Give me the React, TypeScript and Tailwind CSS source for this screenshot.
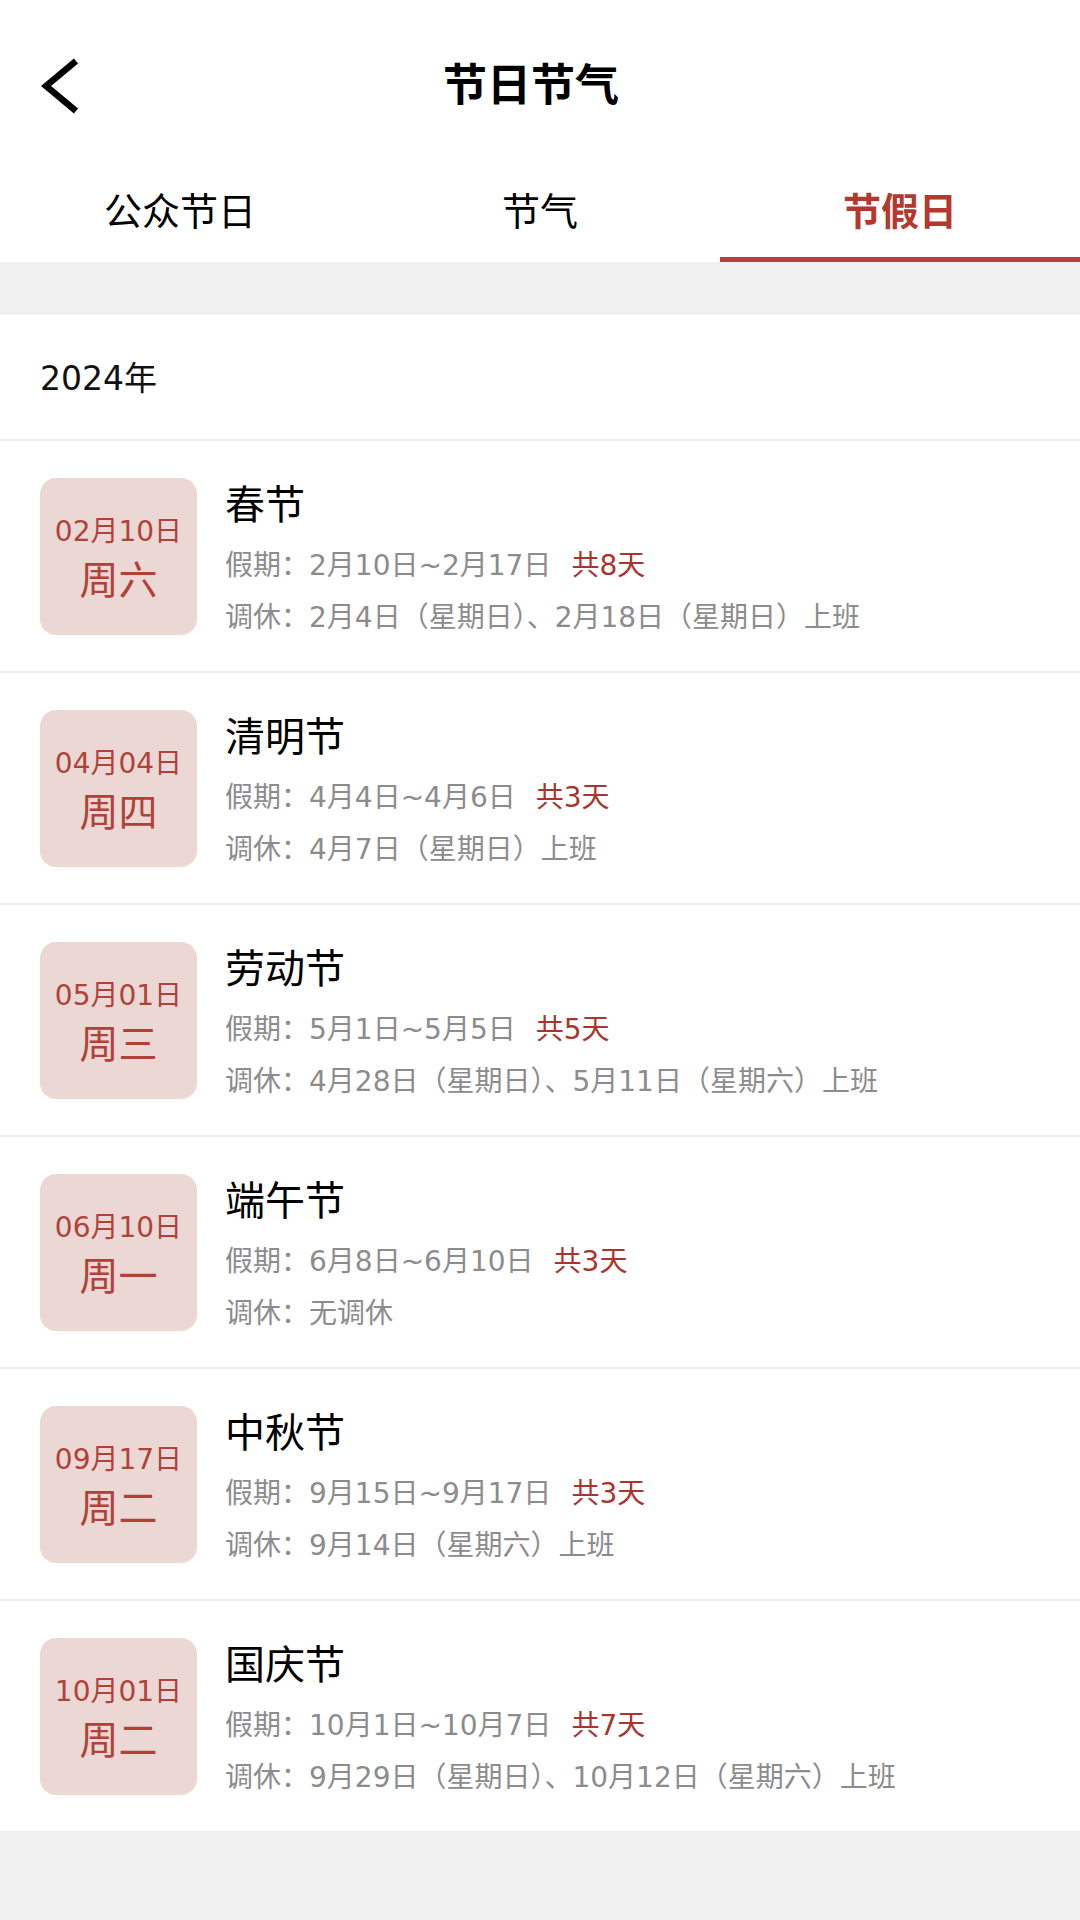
import React from 'react';

const holidays = [
  { md: '02月10日', week: '周六', name: '春节', range: '2月10日~2月17日', days: '共8天', shift: '2月4日（星期日）、2月18日（星期日）上班' },
  { md: '04月04日', week: '周四', name: '清明节', range: '4月4日~4月6日', days: '共3天', shift: '4月7日（星期日）上班' },
  { md: '05月01日', week: '周三', name: '劳动节', range: '5月1日~5月5日', days: '共5天', shift: '4月28日（星期日）、5月11日（星期六）上班' },
  { md: '06月10日', week: '周一', name: '端午节', range: '6月8日~6月10日', days: '共3天', shift: '无调休' },
  { md: '09月17日', week: '周二', name: '中秋节', range: '9月15日~9月17日', days: '共3天', shift: '9月14日（星期六）上班' },
  { md: '10月01日', week: '周二', name: '国庆节', range: '10月1日~10月7日', days: '共7天', shift: '9月29日（星期日）、10月12日（星期六）上班' },
];

const tabs = ['公众节日', '节气', '节假日'];

export default function App() {
  return (
    <div className="min-h-[1920px] w-[1080px] bg-[#f0f0f0] font-['DejaVu_Sans','Noto_Sans_CJK_SC',sans-serif] text-[#111]">
      {/* nav bar */}
      <div className="bg-white">
        <div className="grid h-[172px] grid-cols-[1fr_auto_1fr] items-center">
          <div className="pl-[41px]">
            <svg width="40" height="60" viewBox="0 0 40 60" fill="none">
              <polyline points="35,5 5,30 35,55" stroke="#000" strokeWidth="6.5" strokeLinejoin="miter" />
            </svg>
          </div>
          <h1 className="mr-[18px] text-[44px] font-bold leading-none text-black">节日节气</h1>
          <div />
        </div>

        {/* tabs */}
        <div className="grid grid-cols-3">
          {tabs.map((t, i) => (
            <div key={t} className="flex h-[90px] flex-col">
              <div
                className={
                  i === 2
                    ? 'flex flex-1 items-center justify-center pb-[4px] text-[38px] font-semibold text-[#b3392f]'
                    : 'flex flex-1 items-center justify-center pb-[4px] text-[38px] text-black'
                }
              >
                {t}
              </div>
              <div className={i === 2 ? 'h-[5px] bg-[#b5413a]' : 'h-[5px]'} />
            </div>
          ))}
        </div>
      </div>

      <div className="h-[53px]" />

      {/* list */}
      <div className="bg-white">
        <div className="flex h-[124px] items-center px-[40px] pt-[4px] text-[33px]">2024年</div>
        {holidays.map((h) => (
          <div key={h.name} className="border-t-2 border-[#ededed]">
            <div className="flex h-[230px] items-center px-[40px]">
              <div className="flex h-[157px] w-[157px] shrink-0 flex-col items-center justify-center rounded-[16px] bg-[#ebd7d3] pt-[6px] text-[#b0423a]">
                <div className="text-[28px] leading-[36px]">{h.md}</div>
                <div className="mt-[8px] text-[39px] leading-[46px]">{h.week}</div>
              </div>
              <div className="ml-[28px] mt-[12px] flex flex-col">
                <div className="mb-[11px] text-[40px] leading-[48px] text-black">{h.name}</div>
                <div className="text-[28px] leading-[52px] text-[#8c8c8c]">
                  假期：{h.range}
                  <span className="ml-[20px] text-[#a8352e]">{h.days}</span>
                </div>
                <div className="text-[28px] leading-[52px] text-[#8c8c8c]">调休：{h.shift}</div>
              </div>
            </div>
          </div>
        ))}
      </div>
    </div>
  );
}
